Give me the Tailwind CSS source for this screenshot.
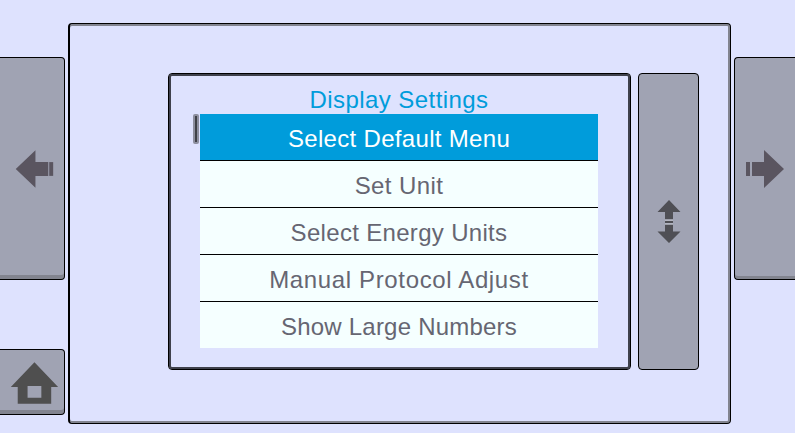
<!DOCTYPE html>
<html lang="en">
<head>
  <meta charset="UTF-8" />
  <title>Display Settings</title>
  <script src="https://cdn.jsdelivr.net/npm/@tailwindcss/browser@4"></script>
</head>
<body class="bg-[#dee2fe] w-[795px] h-[433px] overflow-hidden font-['Liberation_Sans',Arial,sans-serif]">
  <div class="flex w-[795px] h-[433px]">

    <!-- left column -->
    <div class="w-[65px] shrink-0 flex flex-col pt-[57px]">
      <button class="w-full h-[223px] bg-[#a0a3b3] border border-l-0 border-black rounded-r-[4px] shadow-[inset_0_-4px_0_#82848f] flex items-center justify-start">
        <svg width="65" height="61" viewBox="0 0 65 61"><path d="M16 31 36 12V24H49V38H36V50Z" fill="#5a5560"/><rect x="50" y="24" width="4" height="14" fill="#5a5560"/></svg>
      </button>
      <button class="w-full h-[66px] mt-[69px] bg-[#a0a3b3] border border-l-0 border-black rounded-r-[4px] shadow-[inset_0_-4px_0_#82848f] flex items-center justify-start">
        <svg width="65" height="64" viewBox="0 0 65 64"><path fill-rule="evenodd" d="M35 12 59 37H52V54H18V37H11ZM28 36V48H42V36Z" fill="#4f4f4f"/></svg>
      </button>
    </div>

    <!-- main panel -->
    <div class="ml-[3px] mt-[23px] w-[663px] h-[401px] shrink-0 border border-black border-l-2 rounded-[4px] shadow-[inset_0_2px_0_#82848f,inset_-2px_0_0_#82848f,inset_0_-2px_0_#82848f] flex pl-[98px] pt-[49px] gap-[7px]">
      <div class="w-[463px] h-[297px] shrink-0 border border-black rounded-[4px] shadow-[inset_0_0_0_2px_#3f414c] relative pl-[31px] pt-[12px]">
        <div class="absolute left-[24px] top-[40px] w-[6px] h-[30px] bg-[#3f4148] border-2 border-[#8d8f9f] rounded-[2px]"></div>
        <h1 class="h-[28px] w-[398px] text-center text-[24px] leading-[28px] tracking-[0.44px] text-[#009cdb]">Display Settings</h1>
        <ul class="w-[398px] text-[24px] text-center text-[#666672]">
          <li class="h-[47px] leading-[49px] tracking-[0.32px] bg-[#009cdb] text-white border-b border-black">Select Default Menu</li>
          <li class="h-[47px] leading-[49px] tracking-[0.4px] bg-[#f5ffff] border-b border-black">Set Unit</li>
          <li class="h-[47px] leading-[49px] tracking-[0.32px] bg-[#f5ffff] border-b border-black">Select Energy Units</li>
          <li class="h-[47px] leading-[49px] tracking-[0.64px] bg-[#f5ffff] border-b border-black">Manual Protocol Adjust</li>
          <li class="h-[46px] leading-[49px] tracking-[0.22px] bg-[#f5ffff]">Show Large Numbers</li>
        </ul>
      </div>
      <button class="w-[61px] h-[297px] shrink-0 bg-[#a0a3b3] border border-black rounded-[4px] flex items-center justify-center">
        <svg width="26" height="44" viewBox="0 0 26 44"><path d="M13 0 24.500 12H17V19.500H9V12H1.500ZM9 24.500H17V31.500H24.500L13 43 1.500 31.500H9Z" fill="#4f4f55"/><rect x="9" y="21" width="8" height="2" fill="#4f4f55"/><path d="M9 20H17M9 24H17" stroke="#c5c7d0"/></svg>
      </button>
    </div>

    <!-- right column -->
    <div class="ml-[3px] flex-1 pt-[57px]">
      <button class="w-full h-[223px] bg-[#a0a3b3] border border-r-0 border-black rounded-l-[4px] shadow-[inset_0_-3px_0_#82848f] flex items-center justify-start">
        <svg width="60" height="61" viewBox="0 0 60 61"><rect x="11" y="24" width="4" height="14" fill="#5a5560"/><path d="M17 24H29V12L49 31 29 50V38H17Z" fill="#5a5560"/></svg>
      </button>
    </div>

  </div>
</body>
</html>
